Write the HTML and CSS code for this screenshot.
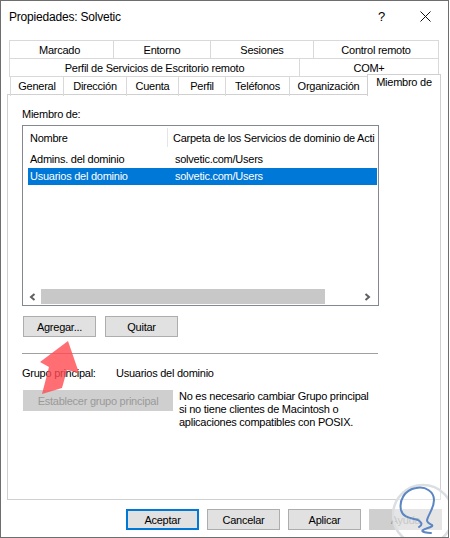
FILE: index.html
```html
<html>
    <head>
        <title>Propiedades: Solvetic</title>
        <link rel="stylesheet" href="styles.css">
    </head>
    <body>
        <div class="window">
            <div class="titlebar">
                <span class="title">Propiedades: Solvetic</span>
                <span class="help">?</span>
                <svg class="close" width="11" height="11" viewBox="0 0 11 11">
                    <path d="M0.5 0.5L10.5 10.5M10.5 0.5L0.5 10.5" stroke="#111" stroke-width="1" fill="none"/>
                </svg>
            </div>

            <div class="tabs">
                <div class="tab-row row-one">
                    <div class="tab">Marcado</div>
                    <div class="tab">Entorno</div>
                    <div class="tab">Sesiones</div>
                    <div class="tab">Control remoto</div>
                </div>
                <div class="tab-row row-two">
                    <div class="tab">Perfil de Servicios de Escritorio remoto</div>
                    <div class="tab">COM+</div>
                </div>
                <div class="tab-row row-three">
                    <div class="tab">General</div>
                    <div class="tab">Dirección</div>
                    <div class="tab">Cuenta</div>
                    <div class="tab">Perfil</div>
                    <div class="tab">Teléfonos</div>
                    <div class="tab">Organización</div>
                    <div class="tab tab-active">Miembro de</div>
                </div>
            </div>

            <div class="panel">
                <div class="list-label">Miembro de:</div>
                <div class="listbox">
                    <div class="list-head">
                        <div class="col-name">Nombre</div>
                        <div class="col-path">Carpeta de los Servicios de dominio de Acti</div>
                    </div>
                    <div class="list-row">
                        <div class="col-name">Admins. del dominio</div>
                        <div class="col-path">solvetic.com/Users</div>
                    </div>
                    <div class="list-row selected">
                        <div class="col-name">Usuarios del dominio</div>
                        <div class="col-path">solvetic.com/Users</div>
                    </div>
                    <div class="hscroll">
                        <svg width="7" height="8" viewBox="0 0 7 8" class="arrow-left">
                            <path d="M5.5 1L2 4L5.5 7" stroke="#606060" stroke-width="2" fill="none"/>
                        </svg>
                        <div class="thumb"></div>
                        <svg width="7" height="8" viewBox="0 0 7 8" class="arrow-right">
                            <path d="M1.5 1L5 4L1.5 7" stroke="#606060" stroke-width="2" fill="none"/>
                        </svg>
                    </div>
                </div>

                <div class="list-actions">
                    <button class="btn">Agregar...</button>
                    <button class="btn">Quitar</button>
                </div>

                <div class="divider"></div>

                <div class="group-line">
                    <span class="group-label">Grupo principal:</span>
                    <span>Usuarios del dominio</span>
                </div>

                <div class="group-set">
                    <button class="btn btn-wide" disabled>Establecer grupo principal</button>
                    <p class="group-note">No es necesario cambiar Grupo principal<br>si no tiene clientes de Macintosh o<br>aplicaciones compatibles con POSIX.</p>
                </div>
            </div>

            <div class="footer">
                <button class="btn btn-default">Aceptar</button>
                <button class="btn">Cancelar</button>
                <button class="btn">Aplicar</button>
                <button class="btn" disabled>Ayuda</button>
            </div>

            <!-- red arrow painted over the screenshot -->
            <svg class="callout" width="60" height="70" viewBox="0 0 60 70">
                <path d="M33 1L5 22L14 27L7 54L27 48L32 30L44 33Z" fill="#ff4a50" fill-opacity="0.8"/>
            </svg>

            <!-- watermark bottom right -->
            <svg class="watermark" width="60" height="60" viewBox="0 0 60 60">
                <circle cx="31" cy="32" r="30" fill="#fff" fill-opacity="0.45" stroke="#dcdfe2" stroke-width="2.5"/>
                <path d="M27 44C30 42 31 40 26 37C19 35 11 35 9 27C7 18 12 7 24 5C34 3 42 9 42 17C42 25 37 30 35 37C35 40 38 41 40 42C42 44 34 45 31 47C28 49 36 50 39 50" stroke="#5b86c2" stroke-width="2" fill="none" stroke-linecap="round" stroke-linejoin="round"/>
            </svg>
        </div>
    </body>
</html>
```

FILE: styles.css
```css
html, body {
    margin: 0;
    padding: 0;
    background-color: #fff;
}
body {
    font-family: 'Liberation Sans', Arial, sans-serif;
    font-size: 11px;
    letter-spacing: -0.25px;
    color: #000;
}
.window {
    position: relative;
    box-sizing: border-box;
    width: 449px;
    height: 538px;
    border: 1px solid #6e6e6e;
    overflow: hidden;
    background-color: #fff;
}
.titlebar {
    display: flex;
    align-items: center;
    height: 31px;
    padding: 0 17px 0 8px;
}
.title {
    flex: 1;
    font-size: 12px;
    letter-spacing: -0.2px;
}
.help {
    margin-right: 35px;
    font-size: 13px;
}
.tabs {
    display: flex;
    flex-direction: column;
    margin: 8px 0 0 8px;
}
.tab-row {
    display: grid;
    height: 18px;
}
.row-one {
    grid-template-columns: 104px 97px 103px 126px;
}
.row-one .tab:first-child {
    padding-right: 4px;
}
.row-two {
    grid-template-columns: 290px 140px;
}
.row-three {
    grid-template-columns: 53px 63px 52px 47px 64px 78px 74px;
    margin-left: 1px;
}
.tab {
    border-top: 1px solid #d9d9d9;
    border-left: 1px solid #d9d9d9;
    text-align: center;
    line-height: 18px;
    white-space: nowrap;
}
.row-one .tab:last-child, .row-two .tab:last-child {
    border-right: 1px solid #d9d9d9;
}
.tab-active {
    position: relative;
    z-index: 1;
    height: 21px;
    margin-top: -2px;
    background-color: #fff;
    border: 1px solid #d0d0d0;
    border-bottom: none;
    line-height: 15px;
}
.panel {
    box-sizing: border-box;
    height: 406px;
    width: 434px;
    margin-left: 6px;
    padding: 11px 14px 0 14px;
    border: 1px solid #d0d0d0;
}
.list-label {
    height: 19px;
    line-height: 16px;
}
.listbox {
    display: flex;
    flex-direction: column;
    box-sizing: border-box;
    height: 181px;
    width: 357px;
    border: 1px solid #828790;
    overflow: hidden;
}
.list-head {
    display: flex;
    height: 25px;
}
.list-head .col-name {
    height: 19px;
    line-height: 21px;
    margin-top: 2px;
    border-right: 1px solid #e5e5e5;
}
.list-head .col-path {
    line-height: 25px;
}
.list-row {
    display: flex;
    height: 17px;
    line-height: 17px;
    margin-left: 5px;
    margin-right: 1px;
}
.list-row .col-name {
    width: 139px;
    padding-left: 2px;
}
.list-row .col-path {
    padding-left: 6px;
}
.col-name {
    flex: none;
    width: 137px;
    padding-left: 7px;
}
.col-path {
    flex: none;
    padding-left: 5px;
    white-space: nowrap;
}
.selected {
    background-color: #0078d7;
    color: #fff;
}
.hscroll {
    display: flex;
    align-items: center;
    height: 15px;
    margin-top: auto;
    margin-bottom: 1px;
}
.arrow-left {
    margin: 0 5px 0 6px;
    width: 7px;
}
.arrow-right {
    margin-left: auto;
    margin-right: 7px;
}
.thumb {
    width: 284px;
    height: 15px;
    background-color: #c8c8c8;
}
.btn {
    box-sizing: border-box;
    width: 73px;
    height: 21px;
    padding: 0;
    border: 1px solid #adadad;
    border-radius: 0;
    background-color: #e1e1e1;
    font-family: inherit;
    font-size: 11px;
    letter-spacing: inherit;
    color: #000;
}
.btn[disabled] {
    background-color: #cfcfcf;
    border-color: #cfcfcf;
    color: #9a9a9a;
}
.list-actions {
    display: flex;
    gap: 9px;
    margin: 10px 0 0 1px;
}
.divider {
    width: 356px;
    height: 1px;
    margin-top: 16px;
    background-color: #a0a0a0;
}
.group-line {
    display: flex;
    height: 17px;
    line-height: 17px;
    margin-top: 11px;
}
.group-label {
    width: 94px;
}
.group-set {
    display: flex;
    gap: 6px;
    margin: 8px 0 0 1px;
}
.btn-wide {
    width: 150px;
    flex: none;
}
.group-note {
    margin: 0;
    line-height: 13px;
    white-space: nowrap;
}
.footer {
    display: flex;
    gap: 8px;
    margin: 9px 0 0 125px;
}
.btn-default {
    border: 2px solid #0078d7;
}
.callout {
    position: absolute;
    left: 34px;
    top: 339px;
}
.watermark {
    position: absolute;
    left: 391px;
    top: 482px;
}
```
